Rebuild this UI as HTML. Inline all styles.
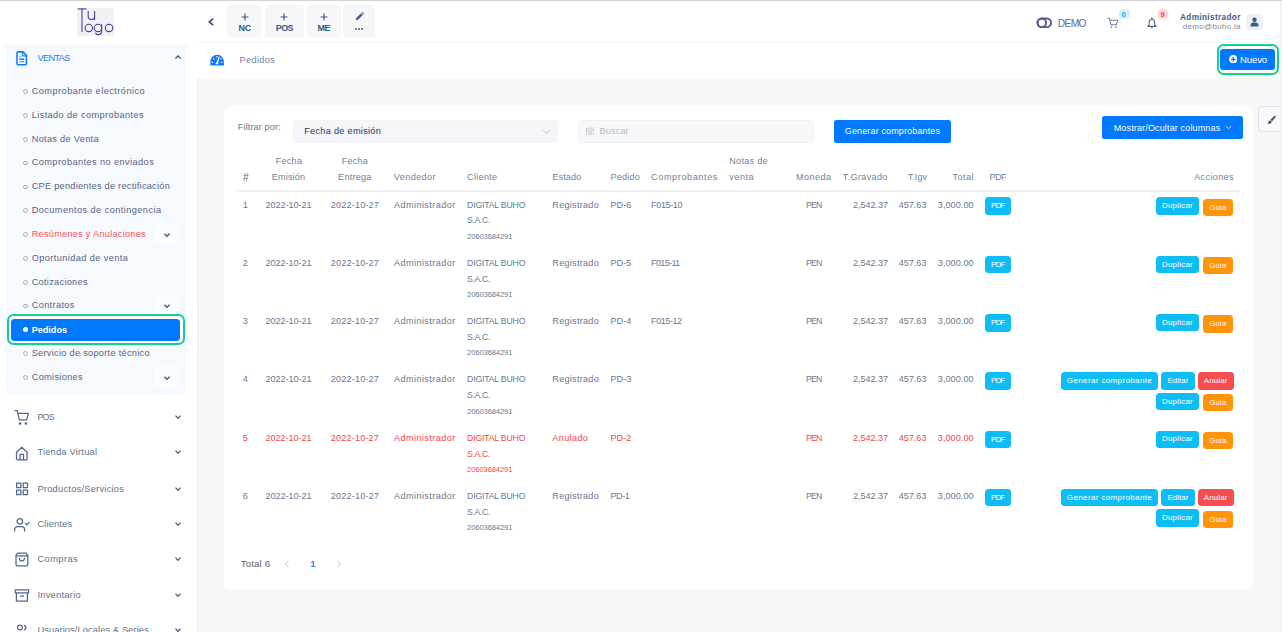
<!DOCTYPE html>
<html lang="es">
<head>
<meta charset="utf-8">
<title>Pedidos</title>
<style>
*{box-sizing:border-box;margin:0;padding:0}
html,body{width:1282px;height:632px;overflow:hidden}
body{font-family:"Liberation Sans",sans-serif;background:#f7f8fa;position:relative}
.t{position:absolute;white-space:nowrap;line-height:1;display:block}
.b{position:absolute;display:block}
</style>
</head>
<body>
<aside>
<div class="b" style="left:0.00px;top:0.00px;width:197.00px;height:632.00px;background:#fff;border-radius:0px;box-shadow:1px 0 2px rgba(30,40,60,.05);"></div>
<div class="b" style="left:77.10px;top:8.00px;width:36.80px;height:27.60px;background:#f1f1f3;border-radius:0px;"></div>
<svg class="b" style="left:77.00px;top:8.00px;" width="37" height="28" viewBox="77 8 37 28"><g fill="none" stroke="#493e9b" stroke-width="1.1" stroke-linecap="butt">
<path d="M77.7 8.9H86.3"/><path d="M82 8.5V31.9"/>
<path d="M88.2 11.1V16.3a3.2 3.2 0 0 0 6.4 0V11.1M94.6 16V20"/>
<circle cx="88.8" cy="27.95" r="3.7"/>
<circle cx="97.95" cy="27.95" r="3.7"/><path d="M101.65 24.2V31.4a3.3 3.2 0 0 1-6.3 1.3"/>
<circle cx="109.05" cy="27.95" r="3.7"/></g></svg>
<div class="b" style="left:4.60px;top:42.80px;width:182.10px;height:352.60px;background:#f6f9fe;border-radius:5px;"></div>
<svg class="b" style="left:16.00px;top:51.00px;" width="12" height="15" viewBox="0 0 12 15"><path d="M2.3 0.9H7l3.4 3.4V12.4a1.3 1.3 0 0 1-1.3 1.3H2.3A1.3 1.3 0 0 1 1 12.4V2.2A1.3 1.3 0 0 1 2.3 0.9Z" fill="#fff" stroke="#0b7dff" stroke-width="1.6" stroke-linejoin="round"/>
<path d="M6.5 1.2V4.9H10.2" fill="none" stroke="#0b7dff" stroke-width="1.2"/>
<path d="M3.2 5.8H4.9" stroke="#0b7dff" stroke-width="0.9"/><path d="M3.2 8.2H8.3" stroke="#0b7dff" stroke-width="1.5"/><path d="M3.2 10.8H8.3" stroke="#0b7dff" stroke-width="1"/></svg>
<span class="t" style="left:37.60px;top:54px;font-size:9.2px;color:#2b7af3;letter-spacing:-0.655px;">VENTAS</span>
<svg class="b" style="left:173.50px;top:54.00px;" width="8" height="6" viewBox="0 0 8 6"><path d="M1.4 4.6L4 2 6.6 4.6" fill="none" stroke="#4a5980" stroke-width="1.4"/></svg>
<div class="b" style="left:154.00px;top:223.38px;width:25.30px;height:21.80px;background:#fafcff;border-radius:3px;"></div>
<svg class="b" style="left:163.30px;top:231.68px;" width="8" height="6" viewBox="-4 -3 8 6"><path d="M-2.6 -1.3L0 1.3 2.6 -1.3" fill="none" stroke="#4a5980" stroke-width="1.5"/></svg>
<div class="b" style="left:154.00px;top:294.87px;width:25.30px;height:21.80px;background:#fafcff;border-radius:3px;"></div>
<svg class="b" style="left:163.30px;top:303.17px;" width="8" height="6" viewBox="-4 -3 8 6"><path d="M-2.6 -1.3L0 1.3 2.6 -1.3" fill="none" stroke="#4a5980" stroke-width="1.5"/></svg>
<div class="b" style="left:154.00px;top:366.36px;width:25.30px;height:21.80px;background:#fafcff;border-radius:3px;"></div>
<svg class="b" style="left:163.30px;top:374.66px;" width="8" height="6" viewBox="-4 -3 8 6"><path d="M-2.6 -1.3L0 1.3 2.6 -1.3" fill="none" stroke="#4a5980" stroke-width="1.5"/></svg>
<div class="b" style="left:23.10px;top:89.30px;width:4.60px;height:4.60px;background:transparent;border-radius:3px;border:1px solid #a9b0be;"></div>
<span class="t" style="left:31.70px;top:87px;font-size:9.2px;color:#56637e;letter-spacing:0.470px;">Comprobante electrónico</span>
<div class="b" style="left:23.10px;top:113.13px;width:4.60px;height:4.60px;background:transparent;border-radius:3px;border:1px solid #a9b0be;"></div>
<span class="t" style="left:31.70px;top:111px;font-size:9.2px;color:#56637e;letter-spacing:0.400px;">Listado de comprobantes</span>
<div class="b" style="left:23.10px;top:136.96px;width:4.60px;height:4.60px;background:transparent;border-radius:3px;border:1px solid #a9b0be;"></div>
<span class="t" style="left:31.70px;top:135px;font-size:9.2px;color:#56637e;letter-spacing:0.314px;">Notas de Venta</span>
<div class="b" style="left:23.10px;top:160.79px;width:4.60px;height:4.60px;background:transparent;border-radius:3px;border:1px solid #a9b0be;"></div>
<span class="t" style="left:31.70px;top:158px;font-size:9.2px;color:#56637e;letter-spacing:0.421px;">Comprobantes no enviados</span>
<div class="b" style="left:23.10px;top:184.62px;width:4.60px;height:4.60px;background:transparent;border-radius:3px;border:1px solid #a9b0be;"></div>
<span class="t" style="left:31.70px;top:182px;font-size:9.2px;color:#56637e;letter-spacing:0.261px;">CPE pendientes de rectificación</span>
<div class="b" style="left:23.10px;top:208.45px;width:4.60px;height:4.60px;background:transparent;border-radius:3px;border:1px solid #a9b0be;"></div>
<span class="t" style="left:31.70px;top:206px;font-size:9.2px;color:#56637e;letter-spacing:0.433px;">Documentos de contingencia</span>
<div class="b" style="left:23.10px;top:232.28px;width:4.60px;height:4.60px;background:transparent;border-radius:3px;border:1px solid #a9b0be;"></div>
<span class="t" style="left:31.70px;top:230px;font-size:9.2px;color:#f4545c;letter-spacing:0.260px;">Resúmenes y Anulaciones</span>
<div class="b" style="left:23.10px;top:256.11px;width:4.60px;height:4.60px;background:transparent;border-radius:3px;border:1px solid #a9b0be;"></div>
<span class="t" style="left:31.70px;top:254px;font-size:9.2px;color:#56637e;letter-spacing:0.411px;">Oportunidad de venta</span>
<div class="b" style="left:23.10px;top:279.94px;width:4.60px;height:4.60px;background:transparent;border-radius:3px;border:1px solid #a9b0be;"></div>
<span class="t" style="left:31.70px;top:278px;font-size:9.2px;color:#56637e;letter-spacing:0.294px;">Cotizaciones</span>
<div class="b" style="left:23.10px;top:303.77px;width:4.60px;height:4.60px;background:transparent;border-radius:3px;border:1px solid #a9b0be;"></div>
<span class="t" style="left:31.70px;top:301px;font-size:9.2px;color:#56637e;letter-spacing:0.357px;">Contratos</span>
<div class="b" style="left:7.00px;top:313.80px;width:178.00px;height:31.00px;background:#fff;border-radius:6.5px;border:2.3px solid #0ed28e;"></div>
<div class="b" style="left:10.80px;top:318.60px;width:169.50px;height:22.80px;background:#0079ff;border-radius:3.5px;"></div>
<div class="b" style="left:23.20px;top:327.40px;width:4.60px;height:4.60px;background:#fff;border-radius:3px;"></div>
<span class="t" style="left:31.70px;top:326px;font-size:9.1px;color:#fff;letter-spacing:-0.013px;font-weight:bold;">Pedidos</span>
<div class="b" style="left:23.10px;top:351.43px;width:4.60px;height:4.60px;background:transparent;border-radius:3px;border:1px solid #a9b0be;"></div>
<span class="t" style="left:31.70px;top:349px;font-size:9.2px;color:#56637e;letter-spacing:0.291px;">Servicio de soporte técnico</span>
<div class="b" style="left:23.10px;top:375.26px;width:4.60px;height:4.60px;background:transparent;border-radius:3px;border:1px solid #a9b0be;"></div>
<span class="t" style="left:31.70px;top:373px;font-size:9.2px;color:#56637e;letter-spacing:0.324px;">Comisiones</span>
<span class="t" style="left:37.40px;top:413px;font-size:8.8px;color:#62718c;letter-spacing:-0.695px;">POS</span>
<svg class="b" style="left:173.60px;top:414.40px;" width="8" height="6" viewBox="-4 -3 8 6"><path d="M-2.5 -1.35L0 1.35 2.5 -1.35" fill="none" stroke="#4a5980" stroke-width="1.35"/></svg>
<span class="t" style="left:37.40px;top:448px;font-size:9.3px;color:#62718c;letter-spacing:0.210px;">Tienda Virtual</span>
<svg class="b" style="left:173.60px;top:449.40px;" width="8" height="6" viewBox="-4 -3 8 6"><path d="M-2.5 -1.35L0 1.35 2.5 -1.35" fill="none" stroke="#4a5980" stroke-width="1.35"/></svg>
<span class="t" style="left:37.40px;top:485px;font-size:9.3px;color:#62718c;letter-spacing:0.243px;">Productos/Servicios</span>
<svg class="b" style="left:173.60px;top:485.50px;" width="8" height="6" viewBox="-4 -3 8 6"><path d="M-2.5 -1.35L0 1.35 2.5 -1.35" fill="none" stroke="#4a5980" stroke-width="1.35"/></svg>
<span class="t" style="left:37.40px;top:520px;font-size:9.3px;color:#62718c;letter-spacing:0.150px;">Clientes</span>
<svg class="b" style="left:173.60px;top:520.80px;" width="8" height="6" viewBox="-4 -3 8 6"><path d="M-2.5 -1.35L0 1.35 2.5 -1.35" fill="none" stroke="#4a5980" stroke-width="1.35"/></svg>
<span class="t" style="left:37.40px;top:555px;font-size:9.3px;color:#62718c;letter-spacing:0.425px;">Compras</span>
<svg class="b" style="left:173.60px;top:556.40px;" width="8" height="6" viewBox="-4 -3 8 6"><path d="M-2.5 -1.35L0 1.35 2.5 -1.35" fill="none" stroke="#4a5980" stroke-width="1.35"/></svg>
<span class="t" style="left:37.40px;top:591px;font-size:9.3px;color:#62718c;letter-spacing:0.276px;">Inventario</span>
<svg class="b" style="left:173.60px;top:591.70px;" width="8" height="6" viewBox="-4 -3 8 6"><path d="M-2.5 -1.35L0 1.35 2.5 -1.35" fill="none" stroke="#4a5980" stroke-width="1.35"/></svg>
<span class="t" style="left:37.40px;top:626px;font-size:9.3px;color:#62718c;letter-spacing:0.098px;">Usuarios/Locales & Series</span>
<svg class="b" style="left:173.60px;top:627.30px;" width="8" height="6" viewBox="-4 -3 8 6"><path d="M-2.5 -1.35L0 1.35 2.5 -1.35" fill="none" stroke="#4a5980" stroke-width="1.35"/></svg>
<svg class="b" style="left:14.00px;top:409.00px;" width="16" height="17" viewBox="0 0 16 17"><g fill="none" stroke="#55658d" stroke-width="1.25" stroke-linecap="round" stroke-linejoin="round"><path d="M1 1.6H3.2L5.3 10.8H12.6L14.4 4.4H4"/></g><circle cx="6.1" cy="14.4" r="1.25" fill="#55658d"/><circle cx="11.9" cy="14.4" r="1.25" fill="#55658d"/></svg>
<svg class="b" style="left:14.00px;top:445.00px;" width="16" height="17" viewBox="0 0 16 17"><g fill="none" stroke="#55658d" stroke-width="1.25" stroke-linecap="round" stroke-linejoin="round"><path d="M2.5 7.2L7.8 2.3L13.1 7.2V13.6a1.2 1.2 0 0 1-1.2 1.2H3.7A1.2 1.2 0 0 1 2.5 13.6Z"/><path d="M6.1 14.6V9.4H9.5V14.6"/></g></svg>
<svg class="b" style="left:14.00px;top:481.00px;" width="16" height="16" viewBox="0 0 16 16"><g fill="none" stroke="#55658d" stroke-width="1.25" stroke-linecap="round" stroke-linejoin="round" stroke-linejoin="miter"><rect x="2.6" y="2.1" width="4.3" height="4.5"/><rect x="9.2" y="2.1" width="4.3" height="4.5"/><rect x="2.6" y="9" width="4.3" height="4.5"/><rect x="9.2" y="9" width="4.3" height="4.5"/></g></svg>
<svg class="b" style="left:13.00px;top:517.00px;" width="18" height="16" viewBox="0 0 18 16"><g fill="none" stroke="#55658d" stroke-width="1.25" stroke-linecap="round" stroke-linejoin="round"><circle cx="6.8" cy="4.4" r="2.7"/><path d="M1.6 14V12.6a3 3 0 0 1 3-3H8.6a3 3 0 0 1 3 3V14"/><path d="M12.4 6.4L13.8 7.8 16 5.4"/></g></svg>
<svg class="b" style="left:14.00px;top:551.00px;" width="16" height="17" viewBox="0 0 16 17"><g fill="none" stroke="#55658d" stroke-width="1.25" stroke-linecap="round" stroke-linejoin="round"><path d="M3.4 2.2H12.4L13.8 4.6V13.6a1.3 1.3 0 0 1-1.3 1.3H3.3A1.3 1.3 0 0 1 2 13.6V4.6Z"/><path d="M2.2 4.8H13.6"/><path d="M5.4 7.4a2.5 2.5 0 0 0 5 0"/></g></svg>
<svg class="b" style="left:14.00px;top:588.00px;" width="16" height="15" viewBox="0 0 16 15"><g fill="none" stroke="#55658d" stroke-width="1.25" stroke-linecap="round" stroke-linejoin="round"><path d="M1.2 1.8H14.6V4.8H1.2Z"/><path d="M2.4 5V13.2H13.4V5"/><path d="M6.4 8H9.4"/></g></svg>
<svg class="b" style="left:16.00px;top:623.00px;" width="14" height="10" viewBox="0 0 14 10"><g fill="none" stroke="#55658d" stroke-width="1.25" stroke-linecap="round" stroke-linejoin="round" stroke-width="1.5"><circle cx="3.9" cy="4.6" r="2.4"/><path d="M8.4 2.3a2.5 2.5 0 0 1 0 4.6"/></g></svg>
</aside>
<header>
<div class="b" style="left:197.00px;top:0.00px;width:1083.00px;height:42.00px;background:#fff;border-radius:0px;"></div>
<div class="b" style="left:197.00px;top:42.00px;width:1083.00px;height:1.00px;background:#f3f4f7;border-radius:0px;"></div>
<div class="b" style="left:197.00px;top:43.00px;width:1083.00px;height:34.70px;background:#fff;border-radius:0px;"></div>
<svg class="b" style="left:206.00px;top:16.00px;" width="10" height="12" viewBox="0 0 10 12"><path d="M7.2 2.7L3.3 5.9 7.2 9.1" fill="none" stroke="#3f4e72" stroke-width="1.7"/></svg>
<div class="b" style="left:227.40px;top:4.00px;width:34.60px;height:33.90px;background:#f6f7f9;border-radius:4.5px;"></div>
<svg class="b" style="left:240.70px;top:12.70px;" width="8" height="8" viewBox="0 0 8 8"><path d="M4 0.6V7.4M0.6 4H7.4" stroke="#42597f" stroke-width="1.15"/></svg>
<span class="t" style="left:238.45px;top:24px;font-size:9px;color:#42557f;letter-spacing:-0.250px;font-weight:bold;">NC</span>
<div class="b" style="left:264.80px;top:4.00px;width:39.20px;height:33.90px;background:#f6f7f9;border-radius:4.5px;"></div>
<svg class="b" style="left:280.40px;top:12.70px;" width="8" height="8" viewBox="0 0 8 8"><path d="M4 0.6V7.4M0.6 4H7.4" stroke="#42597f" stroke-width="1.15"/></svg>
<span class="t" style="left:275.85px;top:24px;font-size:9px;color:#42557f;letter-spacing:-0.636px;font-weight:bold;">POS</span>
<div class="b" style="left:306.80px;top:4.00px;width:33.90px;height:33.90px;background:#f6f7f9;border-radius:4.5px;"></div>
<svg class="b" style="left:319.75px;top:12.70px;" width="8" height="8" viewBox="0 0 8 8"><path d="M4 0.6V7.4M0.6 4H7.4" stroke="#42597f" stroke-width="1.15"/></svg>
<span class="t" style="left:317.55px;top:24px;font-size:9px;color:#42557f;letter-spacing:-0.550px;font-weight:bold;">ME</span>
<div class="b" style="left:343.20px;top:4.00px;width:31.40px;height:33.90px;background:#f6f7f9;border-radius:4.5px;"></div>
<svg class="b" style="left:354.60px;top:11.80px;" width="9" height="9" viewBox="0 0 10 10"><path d="M0.8 9.2L1.4 6.6 6.4 1.6 8.4 3.6 3.4 8.6Z M7 1L7.6 0.5a0.8 0.8 0 0 1 1.1 0L9.5 1.3a0.8 0.8 0 0 1 0 1.1L9 3Z" fill="#3f5a8c"/></svg>
<div class="b" style="left:355.40px;top:27.90px;width:2.00px;height:2.20px;background:#44537a;border-radius:1px;"></div>
<div class="b" style="left:358.20px;top:27.90px;width:2.00px;height:2.20px;background:#44537a;border-radius:1px;"></div>
<div class="b" style="left:361.00px;top:27.90px;width:2.00px;height:2.20px;background:#44537a;border-radius:1px;"></div>
<svg class="b" style="left:209.80px;top:53.90px;" width="14.3" height="12" viewBox="0 0 15 12.4"><path d="M0.4 12V8a7.1 7.4 0 0 1 14.2 0V12Z" fill="#0a78ff"/>
<path d="M7.6 9.6L9.4 3.2" stroke="#fff" stroke-width="1.4" stroke-linecap="round"/><circle cx="7.4" cy="9.6" r="1.3" fill="#fff"/>
<circle cx="2.6" cy="8.6" r="0.8" fill="#fff"/><circle cx="4" cy="4.8" r="0.8" fill="#fff"/><circle cx="7.2" cy="2.8" r="0.8" fill="#fff"/><circle cx="11.4" cy="5" r="0.8" fill="#fff"/><circle cx="12.6" cy="8.6" r="0.8" fill="#fff"/></svg>
<span class="t" style="left:239.60px;top:56px;font-size:9.2px;color:#74819a;letter-spacing:0.336px;">Pedidos</span>
<svg class="b" style="left:1036.00px;top:17.00px;" width="17" height="12" viewBox="0 0 17 12"><rect x="1.5" y="1.5" width="13.6" height="8.6" rx="4.3" fill="none" stroke="#50608a" stroke-width="1.9"/><circle cx="5.8" cy="5.8" r="4.3" fill="none" stroke="#50608a" stroke-width="1.9"/></svg>
<span class="t" style="left:1057.70px;top:19px;font-size:10.3px;color:#5d6b8a;letter-spacing:-0.650px;">DEMO</span>
<svg class="b" style="left:1106.50px;top:17.20px;" width="12" height="12" viewBox="0 0 12 12"><g fill="none" stroke="#717e99" stroke-width="1.05" stroke-linecap="round" stroke-linejoin="round"><path d="M0.8 1.2H2.4L4 7.8H9.4L10.8 3.2H3"/></g><circle cx="4.6" cy="10.1" r="0.85" fill="#717e99"/><circle cx="9" cy="10.1" r="0.85" fill="#717e99"/></svg>
<div class="b" style="left:1119.00px;top:9.40px;width:10.50px;height:9.80px;background:#d6f0fc;border-radius:3px;"></div>
<span class="t" style="left:1121.56px;top:11px;font-size:7.5px;color:#19aeea;font-weight:bold;">0</span>
<svg class="b" style="left:1146.00px;top:17.40px;" width="12" height="12" viewBox="0 0 12 12"><g fill="none" stroke="#5d6b8a" stroke-width="1.15" stroke-linecap="round" stroke-linejoin="round"><path d="M3.2 8.3V5.1a2.7 2.9 0 0 1 5.4 0V8.3L10.2 9.3H1.6Z"/><path d="M5.9 9.6V11"/><path d="M5.9 0.5V1.8"/></g></svg>
<div class="b" style="left:1158.00px;top:9.40px;width:10.30px;height:9.80px;background:#ffd8db;border-radius:3px;"></div>
<span class="t" style="left:1160.46px;top:11px;font-size:7.5px;color:#f0444c;font-weight:bold;">9</span>
<span class="t" style="left:1180.10px;top:14px;font-size:8.2px;color:#42588a;letter-spacing:0.359px;font-weight:bold;">Administrador</span>
<span class="t" style="left:1182.80px;top:23px;font-size:8px;color:#7d889d;letter-spacing:0.302px;">demo@buho.la</span>
<div class="b" style="left:1246.00px;top:13.80px;width:17.00px;height:16.20px;background:#eef0f4;border-radius:3.5px;"></div>
<svg class="b" style="left:1250.00px;top:17.00px;" width="9" height="10" viewBox="0 0 9 10"><circle cx="4.5" cy="2.8" r="2.2" fill="#3f5a8a"/><path d="M0.6 9.4V8a2.6 2.6 0 0 1 2.6-2.6H5.8A2.6 2.6 0 0 1 8.4 8V9.4Z" fill="#3f5a8a"/></svg>
<div class="b" style="left:1217.00px;top:44.00px;width:62.00px;height:31.00px;background:#fff;border-radius:6.5px;border:2.4px solid #0ed28e;"></div>
<div class="b" style="left:1220.40px;top:48.50px;width:54.20px;height:21.70px;background:#0079ff;border-radius:3px;"></div>
<svg class="b" style="left:1228.70px;top:54.90px;" width="8.6" height="8.6" viewBox="0 0 8.4 8.4"><circle cx="4.2" cy="4.2" r="4.1" fill="#fff"/><path d="M4.2 2V6.4M2 4.2H6.4" stroke="#0079ff" stroke-width="1.3"/></svg>
<span class="t" style="left:1240.00px;top:55px;font-size:9.6px;color:#fff;letter-spacing:-0.150px;">Nuevo</span>
<div class="b" style="left:1258.00px;top:106.20px;width:24.00px;height:26.20px;background:#f8f9fa;border-radius:0px;border:1px solid #e0e2e7;border-right:none;border-radius:4px 0 0 4px;"></div>
<svg class="b" style="left:1266.80px;top:115.00px;" width="9" height="9.6" viewBox="0 0 12 12"><path d="M10.6 0.2L11.9 1.5 6.8 8 4.6 6Z" fill="#43474f"/><path d="M4.2 6.6L6.2 8.6C6 10.8 3.4 11.8 0.4 11.2 2.4 10.2 2.2 7 4.2 6.6Z" fill="#43474f"/></svg>
<div class="b" style="left:1280.00px;top:0.00px;width:2.00px;height:632.00px;background:#f1f2f4;border-radius:0px;"></div>
</header>
<main>
<div class="b" style="left:223.60px;top:105.70px;width:1029.60px;height:483.10px;background:#fff;border-radius:8px;"></div>
<span class="t" style="left:237.80px;top:123px;font-size:9.1px;color:#69778f;letter-spacing:0.129px;">Filtrar por:</span>
<div class="b" style="left:293.00px;top:120.00px;width:264.60px;height:22.60px;background:#f5f6f9;border-radius:4px;border:1px solid #f1f2f5;"></div>
<span class="t" style="left:304.20px;top:127px;font-size:9.2px;color:#2c3957;letter-spacing:0.274px;">Fecha de emisión</span>
<svg class="b" style="left:541.50px;top:128.80px;" width="9" height="6" viewBox="0 0 9 6"><path d="M0.8 1L4.5 4.6 8.2 1" fill="none" stroke="#b3bac6" stroke-width="0.9"/></svg>
<div class="b" style="left:578.30px;top:120.00px;width:235.30px;height:22.60px;background:#f7f8fa;border-radius:4px;border:1px solid #eef0f3;"></div>
<svg class="b" style="left:586.00px;top:126.80px;" width="8.4" height="8.4" viewBox="0 0 8.4 8.4"><g fill="none" stroke="#b9bfca" stroke-width="0.8"><rect x="0.5" y="1.1" width="7.4" height="6.8" rx="0.6"/><path d="M0.5 3.1H7.9M2.2 4.8H6.2M2.2 6.2H6.2"/></g></svg>
<span class="t" style="left:599.60px;top:127px;font-size:9.1px;color:#b4b9c3;letter-spacing:0.147px;">Buscar</span>
<div class="b" style="left:834.00px;top:120.00px;width:116.90px;height:22.50px;background:#0079ff;border-radius:2.5px;"></div>
<span class="t" style="left:844.80px;top:127px;font-size:9px;color:#fff;letter-spacing:0.138px;">Generar comprobantes</span>
<div class="b" style="left:1102.30px;top:116.00px;width:140.70px;height:23.10px;background:#0079ff;border-radius:2.5px;"></div>
<span class="t" style="left:1113.70px;top:124px;font-size:9px;color:#fff;letter-spacing:0.149px;">Mostrar/Ocultar columnas</span>
<svg class="b" style="left:1224.80px;top:125.00px;" width="7" height="5" viewBox="0 0 7 5"><path d="M0.7 1L3.5 3.8 6.3 1" fill="none" stroke="#fff" stroke-width="0.8"/></svg>
<span class="t" style="left:243.10px;top:173px;font-size:10.3px;color:#5a6880;">#</span>
<span class="t" style="left:275.80px;top:157px;font-size:9.1px;color:#717f97;letter-spacing:0.222px;">Fecha</span>
<span class="t" style="left:271.75px;top:173px;font-size:9.1px;color:#717f97;letter-spacing:0.162px;">Emisión</span>
<span class="t" style="left:341.70px;top:157px;font-size:9.1px;color:#717f97;letter-spacing:0.222px;">Fecha</span>
<span class="t" style="left:338.10px;top:173px;font-size:9.1px;color:#717f97;letter-spacing:0.247px;">Entrega</span>
<span class="t" style="left:393.80px;top:173px;font-size:9.1px;color:#717f97;letter-spacing:0.405px;">Vendedor</span>
<span class="t" style="left:467.10px;top:173px;font-size:9.1px;color:#717f97;letter-spacing:0.296px;">Cliente</span>
<span class="t" style="left:552.30px;top:173px;font-size:9.1px;color:#717f97;letter-spacing:0.112px;">Estado</span>
<span class="t" style="left:610.50px;top:173px;font-size:9.1px;color:#717f97;letter-spacing:0.211px;">Pedido</span>
<span class="t" style="left:651.10px;top:173px;font-size:9.1px;color:#717f97;letter-spacing:0.601px;">Comprobantes</span>
<span class="t" style="left:729.20px;top:157px;font-size:9.1px;color:#717f97;letter-spacing:0.285px;">Notas de</span>
<span class="t" style="left:729.20px;top:173px;font-size:9.1px;color:#717f97;letter-spacing:0.548px;">venta</span>
<span class="t" style="left:796.10px;top:173px;font-size:9.1px;color:#717f97;letter-spacing:0.436px;">Moneda</span>
<span class="t" style="left:842.80px;top:173px;font-size:9.1px;color:#717f97;letter-spacing:0.325px;">T.Gravado</span>
<span class="t" style="left:907.70px;top:173px;font-size:9.1px;color:#717f97;letter-spacing:0.057px;">T.Igv</span>
<span class="t" style="left:952.60px;top:173px;font-size:9.1px;color:#717f97;letter-spacing:0.456px;">Total</span>
<span class="t" style="left:989.60px;top:173px;font-size:9.1px;color:#717f97;letter-spacing:-0.667px;">PDF</span>
<span class="t" style="left:1194.20px;top:173px;font-size:9.1px;color:#717f97;letter-spacing:0.347px;">Acciones</span>
<div class="b" style="left:237.20px;top:190.30px;width:1002.50px;height:1.60px;background:#f0f2f5;border-radius:0px;"></div>
<span class="t" style="left:242.80px;top:201px;font-size:9.1px;color:#69778f;">1</span>
<span class="t" style="left:265.50px;top:201px;font-size:9.1px;color:#69778f;letter-spacing:-0.054px;">2022-10-21</span>
<span class="t" style="left:330.80px;top:201px;font-size:9.1px;color:#69778f;letter-spacing:0.176px;">2022-10-27</span>
<span class="t" style="left:393.90px;top:201px;font-size:9.1px;color:#69778f;letter-spacing:0.444px;">Administrador</span>
<span class="t" style="left:467.10px;top:201px;font-size:8.7px;color:#69778f;letter-spacing:-0.185px;">DIGITAL BUHO</span>
<span class="t" style="left:467.10px;top:216px;font-size:8.7px;color:#69778f;letter-spacing:-0.373px;">S.A.C.</span>
<span class="t" style="left:467.10px;top:233px;font-size:7.6px;color:#69778f;letter-spacing:-0.117px;">20603684291</span>
<span class="t" style="left:552.30px;top:201px;font-size:9.1px;color:#69778f;letter-spacing:0.270px;">Registrado</span>
<span class="t" style="left:610.50px;top:201px;font-size:9.1px;color:#69778f;letter-spacing:0.042px;">PD-6</span>
<span class="t" style="left:651.10px;top:201px;font-size:9.1px;color:#69778f;letter-spacing:-0.413px;">F015-10</span>
<span class="t" style="left:806.00px;top:201px;font-size:8.7px;color:#69778f;letter-spacing:-0.763px;">PEN</span>
<span class="t" style="left:853.00px;top:201px;font-size:9.1px;color:#69778f;letter-spacing:-0.065px;">2,542.37</span>
<span class="t" style="left:898.70px;top:201px;font-size:9.1px;color:#69778f;letter-spacing:-0.005px;">457.63</span>
<span class="t" style="left:937.80px;top:201px;font-size:9.1px;color:#69778f;letter-spacing:0.060px;">3,000.00</span>
<div class="b" style="left:984.70px;top:197.30px;width:26.10px;height:17.70px;background:#0fbdf6;border-radius:3.5px;"></div>
<span class="t" style="left:991.10px;top:202px;font-size:7.9px;color:#fff;letter-spacing:-0.867px;">PDF</span>
<div class="b" style="left:1155.70px;top:197.30px;width:43.70px;height:17.50px;background:#0fbdf6;border-radius:3.5px;"></div>
<span class="t" style="left:1161.95px;top:202px;font-size:7.9px;color:#fff;letter-spacing:0.266px;">Duplicar</span>
<div class="b" style="left:1203.00px;top:198.70px;width:29.90px;height:17.40px;background:#ff9409;border-radius:3.5px;"></div>
<span class="t" style="left:1209.20px;top:204px;font-size:7.9px;color:#fff;letter-spacing:0.069px;">Guía</span>
<span class="t" style="left:242.80px;top:259px;font-size:9.1px;color:#69778f;">2</span>
<span class="t" style="left:265.50px;top:259px;font-size:9.1px;color:#69778f;letter-spacing:-0.054px;">2022-10-21</span>
<span class="t" style="left:330.80px;top:259px;font-size:9.1px;color:#69778f;letter-spacing:0.176px;">2022-10-27</span>
<span class="t" style="left:393.90px;top:259px;font-size:9.1px;color:#69778f;letter-spacing:0.444px;">Administrador</span>
<span class="t" style="left:467.10px;top:259px;font-size:8.7px;color:#69778f;letter-spacing:-0.185px;">DIGITAL BUHO</span>
<span class="t" style="left:467.10px;top:275px;font-size:8.7px;color:#69778f;letter-spacing:-0.373px;">S.A.C.</span>
<span class="t" style="left:467.10px;top:291px;font-size:7.6px;color:#69778f;letter-spacing:-0.117px;">20603684291</span>
<span class="t" style="left:552.30px;top:259px;font-size:9.1px;color:#69778f;letter-spacing:0.270px;">Registrado</span>
<span class="t" style="left:610.50px;top:259px;font-size:9.1px;color:#69778f;letter-spacing:0.042px;">PD-5</span>
<span class="t" style="left:651.10px;top:259px;font-size:9.1px;color:#69778f;letter-spacing:-0.688px;">F015-11</span>
<span class="t" style="left:806.00px;top:259px;font-size:8.7px;color:#69778f;letter-spacing:-0.763px;">PEN</span>
<span class="t" style="left:853.00px;top:259px;font-size:9.1px;color:#69778f;letter-spacing:-0.065px;">2,542.37</span>
<span class="t" style="left:898.70px;top:259px;font-size:9.1px;color:#69778f;letter-spacing:-0.005px;">457.63</span>
<span class="t" style="left:937.80px;top:259px;font-size:9.1px;color:#69778f;letter-spacing:0.060px;">3,000.00</span>
<div class="b" style="left:984.70px;top:255.60px;width:26.10px;height:17.70px;background:#0fbdf6;border-radius:3.5px;"></div>
<span class="t" style="left:991.10px;top:261px;font-size:7.9px;color:#fff;letter-spacing:-0.867px;">PDF</span>
<div class="b" style="left:1155.70px;top:255.60px;width:43.70px;height:17.50px;background:#0fbdf6;border-radius:3.5px;"></div>
<span class="t" style="left:1161.95px;top:261px;font-size:7.9px;color:#fff;letter-spacing:0.266px;">Duplicar</span>
<div class="b" style="left:1203.00px;top:257.00px;width:29.90px;height:17.40px;background:#ff9409;border-radius:3.5px;"></div>
<span class="t" style="left:1209.20px;top:262px;font-size:7.9px;color:#fff;letter-spacing:0.069px;">Guía</span>
<span class="t" style="left:242.80px;top:317px;font-size:9.1px;color:#69778f;">3</span>
<span class="t" style="left:265.50px;top:317px;font-size:9.1px;color:#69778f;letter-spacing:-0.054px;">2022-10-21</span>
<span class="t" style="left:330.80px;top:317px;font-size:9.1px;color:#69778f;letter-spacing:0.176px;">2022-10-27</span>
<span class="t" style="left:393.90px;top:317px;font-size:9.1px;color:#69778f;letter-spacing:0.444px;">Administrador</span>
<span class="t" style="left:467.10px;top:317px;font-size:8.7px;color:#69778f;letter-spacing:-0.185px;">DIGITAL BUHO</span>
<span class="t" style="left:467.10px;top:333px;font-size:8.7px;color:#69778f;letter-spacing:-0.373px;">S.A.C.</span>
<span class="t" style="left:467.10px;top:349px;font-size:7.6px;color:#69778f;letter-spacing:-0.117px;">20603684291</span>
<span class="t" style="left:552.30px;top:317px;font-size:9.1px;color:#69778f;letter-spacing:0.270px;">Registrado</span>
<span class="t" style="left:610.50px;top:317px;font-size:9.1px;color:#69778f;letter-spacing:0.042px;">PD-4</span>
<span class="t" style="left:651.10px;top:317px;font-size:9.1px;color:#69778f;letter-spacing:-0.470px;">F015-12</span>
<span class="t" style="left:806.00px;top:317px;font-size:8.7px;color:#69778f;letter-spacing:-0.763px;">PEN</span>
<span class="t" style="left:853.00px;top:317px;font-size:9.1px;color:#69778f;letter-spacing:-0.065px;">2,542.37</span>
<span class="t" style="left:898.70px;top:317px;font-size:9.1px;color:#69778f;letter-spacing:-0.005px;">457.63</span>
<span class="t" style="left:937.80px;top:317px;font-size:9.1px;color:#69778f;letter-spacing:0.060px;">3,000.00</span>
<div class="b" style="left:984.70px;top:313.90px;width:26.10px;height:17.70px;background:#0fbdf6;border-radius:3.5px;"></div>
<span class="t" style="left:991.10px;top:319px;font-size:7.9px;color:#fff;letter-spacing:-0.867px;">PDF</span>
<div class="b" style="left:1155.70px;top:313.90px;width:43.70px;height:17.50px;background:#0fbdf6;border-radius:3.5px;"></div>
<span class="t" style="left:1161.95px;top:319px;font-size:7.9px;color:#fff;letter-spacing:0.266px;">Duplicar</span>
<div class="b" style="left:1203.00px;top:315.30px;width:29.90px;height:17.40px;background:#ff9409;border-radius:3.5px;"></div>
<span class="t" style="left:1209.20px;top:320px;font-size:7.9px;color:#fff;letter-spacing:0.069px;">Guía</span>
<span class="t" style="left:242.80px;top:375px;font-size:9.1px;color:#69778f;">4</span>
<span class="t" style="left:265.50px;top:375px;font-size:9.1px;color:#69778f;letter-spacing:-0.054px;">2022-10-21</span>
<span class="t" style="left:330.80px;top:375px;font-size:9.1px;color:#69778f;letter-spacing:0.176px;">2022-10-27</span>
<span class="t" style="left:393.90px;top:375px;font-size:9.1px;color:#69778f;letter-spacing:0.444px;">Administrador</span>
<span class="t" style="left:467.10px;top:375px;font-size:8.7px;color:#69778f;letter-spacing:-0.185px;">DIGITAL BUHO</span>
<span class="t" style="left:467.10px;top:391px;font-size:8.7px;color:#69778f;letter-spacing:-0.373px;">S.A.C.</span>
<span class="t" style="left:467.10px;top:408px;font-size:7.6px;color:#69778f;letter-spacing:-0.117px;">20603684291</span>
<span class="t" style="left:552.30px;top:375px;font-size:9.1px;color:#69778f;letter-spacing:0.270px;">Registrado</span>
<span class="t" style="left:610.50px;top:375px;font-size:9.1px;color:#69778f;letter-spacing:0.042px;">PD-3</span>
<span class="t" style="left:806.00px;top:375px;font-size:8.7px;color:#69778f;letter-spacing:-0.763px;">PEN</span>
<span class="t" style="left:853.00px;top:375px;font-size:9.1px;color:#69778f;letter-spacing:-0.065px;">2,542.37</span>
<span class="t" style="left:898.70px;top:375px;font-size:9.1px;color:#69778f;letter-spacing:-0.005px;">457.63</span>
<span class="t" style="left:937.80px;top:375px;font-size:9.1px;color:#69778f;letter-spacing:0.060px;">3,000.00</span>
<div class="b" style="left:984.70px;top:372.20px;width:26.10px;height:17.70px;background:#0fbdf6;border-radius:3.5px;"></div>
<span class="t" style="left:991.10px;top:377px;font-size:7.9px;color:#fff;letter-spacing:-0.867px;">PDF</span>
<div class="b" style="left:1060.90px;top:372.20px;width:97.20px;height:17.50px;background:#0fbdf6;border-radius:3.5px;"></div>
<span class="t" style="left:1066.85px;top:377px;font-size:8px;color:#fff;letter-spacing:0.371px;">Generar comprobante</span>
<div class="b" style="left:1161.00px;top:372.20px;width:33.80px;height:17.50px;background:#0fbdf6;border-radius:3.5px;"></div>
<span class="t" style="left:1167.45px;top:377px;font-size:7.9px;color:#fff;letter-spacing:0.044px;">Editar</span>
<div class="b" style="left:1197.50px;top:372.20px;width:36.40px;height:17.50px;background:#f64d50;border-radius:3.5px;"></div>
<span class="t" style="left:1203.70px;top:377px;font-size:7.9px;color:#fff;letter-spacing:0.194px;">Anular</span>
<div class="b" style="left:1155.70px;top:392.70px;width:43.70px;height:17.50px;background:#0fbdf6;border-radius:3.5px;"></div>
<span class="t" style="left:1161.95px;top:398px;font-size:7.9px;color:#fff;letter-spacing:0.266px;">Duplicar</span>
<div class="b" style="left:1203.00px;top:394.10px;width:29.90px;height:17.40px;background:#ff9409;border-radius:3.5px;"></div>
<span class="t" style="left:1209.20px;top:399px;font-size:7.9px;color:#fff;letter-spacing:0.069px;">Guía</span>
<span class="t" style="left:242.80px;top:434px;font-size:9.1px;color:#f3444c;">5</span>
<span class="t" style="left:265.50px;top:434px;font-size:9.1px;color:#f3444c;letter-spacing:-0.054px;">2022-10-21</span>
<span class="t" style="left:330.80px;top:434px;font-size:9.1px;color:#f3444c;letter-spacing:0.176px;">2022-10-27</span>
<span class="t" style="left:393.90px;top:434px;font-size:9.1px;color:#f3444c;letter-spacing:0.444px;">Administrador</span>
<span class="t" style="left:467.10px;top:434px;font-size:8.7px;color:#f3444c;letter-spacing:-0.185px;">DIGITAL BUHO</span>
<span class="t" style="left:467.10px;top:450px;font-size:8.7px;color:#f3444c;letter-spacing:-0.373px;">S.A.C.</span>
<span class="t" style="left:467.10px;top:466px;font-size:7.6px;color:#f3444c;letter-spacing:-0.117px;">20603684291</span>
<span class="t" style="left:552.30px;top:434px;font-size:9.1px;color:#f3444c;letter-spacing:0.372px;">Anulado</span>
<span class="t" style="left:610.50px;top:434px;font-size:9.1px;color:#f3444c;letter-spacing:0.042px;">PD-2</span>
<span class="t" style="left:806.00px;top:434px;font-size:8.7px;color:#f3444c;letter-spacing:-0.763px;">PEN</span>
<span class="t" style="left:853.00px;top:434px;font-size:9.1px;color:#f3444c;letter-spacing:-0.065px;">2,542.37</span>
<span class="t" style="left:898.70px;top:434px;font-size:9.1px;color:#f3444c;letter-spacing:-0.005px;">457.63</span>
<span class="t" style="left:937.80px;top:434px;font-size:9.1px;color:#f3444c;letter-spacing:0.060px;">3,000.00</span>
<div class="b" style="left:984.70px;top:430.50px;width:26.10px;height:17.70px;background:#0fbdf6;border-radius:3.5px;"></div>
<span class="t" style="left:991.10px;top:436px;font-size:7.9px;color:#fff;letter-spacing:-0.867px;">PDF</span>
<div class="b" style="left:1155.70px;top:430.50px;width:43.70px;height:17.50px;background:#0fbdf6;border-radius:3.5px;"></div>
<span class="t" style="left:1161.95px;top:435px;font-size:7.9px;color:#fff;letter-spacing:0.266px;">Duplicar</span>
<div class="b" style="left:1203.00px;top:431.90px;width:29.90px;height:17.40px;background:#ff9409;border-radius:3.5px;"></div>
<span class="t" style="left:1209.20px;top:437px;font-size:7.9px;color:#fff;letter-spacing:0.069px;">Guía</span>
<span class="t" style="left:242.80px;top:492px;font-size:9.1px;color:#69778f;">6</span>
<span class="t" style="left:265.50px;top:492px;font-size:9.1px;color:#69778f;letter-spacing:-0.054px;">2022-10-21</span>
<span class="t" style="left:330.80px;top:492px;font-size:9.1px;color:#69778f;letter-spacing:0.176px;">2022-10-27</span>
<span class="t" style="left:393.90px;top:492px;font-size:9.1px;color:#69778f;letter-spacing:0.444px;">Administrador</span>
<span class="t" style="left:467.10px;top:492px;font-size:8.7px;color:#69778f;letter-spacing:-0.185px;">DIGITAL BUHO</span>
<span class="t" style="left:467.10px;top:508px;font-size:8.7px;color:#69778f;letter-spacing:-0.373px;">S.A.C.</span>
<span class="t" style="left:467.10px;top:524px;font-size:7.6px;color:#69778f;letter-spacing:-0.117px;">20603684291</span>
<span class="t" style="left:552.30px;top:492px;font-size:9.1px;color:#69778f;letter-spacing:0.270px;">Registrado</span>
<span class="t" style="left:610.50px;top:492px;font-size:9.1px;color:#69778f;letter-spacing:-0.483px;">PD-1</span>
<span class="t" style="left:806.00px;top:492px;font-size:8.7px;color:#69778f;letter-spacing:-0.763px;">PEN</span>
<span class="t" style="left:853.00px;top:492px;font-size:9.1px;color:#69778f;letter-spacing:-0.065px;">2,542.37</span>
<span class="t" style="left:898.70px;top:492px;font-size:9.1px;color:#69778f;letter-spacing:-0.005px;">457.63</span>
<span class="t" style="left:937.80px;top:492px;font-size:9.1px;color:#69778f;letter-spacing:0.060px;">3,000.00</span>
<div class="b" style="left:984.70px;top:488.80px;width:26.10px;height:17.70px;background:#0fbdf6;border-radius:3.5px;"></div>
<span class="t" style="left:991.10px;top:494px;font-size:7.9px;color:#fff;letter-spacing:-0.867px;">PDF</span>
<div class="b" style="left:1060.90px;top:488.80px;width:97.20px;height:17.50px;background:#0fbdf6;border-radius:3.5px;"></div>
<span class="t" style="left:1066.85px;top:494px;font-size:8px;color:#fff;letter-spacing:0.371px;">Generar comprobante</span>
<div class="b" style="left:1161.00px;top:488.80px;width:33.80px;height:17.50px;background:#0fbdf6;border-radius:3.5px;"></div>
<span class="t" style="left:1167.45px;top:494px;font-size:7.9px;color:#fff;letter-spacing:0.044px;">Editar</span>
<div class="b" style="left:1197.50px;top:488.80px;width:36.40px;height:17.50px;background:#f64d50;border-radius:3.5px;"></div>
<span class="t" style="left:1203.70px;top:494px;font-size:7.9px;color:#fff;letter-spacing:0.194px;">Anular</span>
<div class="b" style="left:1155.70px;top:509.30px;width:43.70px;height:17.50px;background:#0fbdf6;border-radius:3.5px;"></div>
<span class="t" style="left:1161.95px;top:514px;font-size:7.9px;color:#fff;letter-spacing:0.266px;">Duplicar</span>
<div class="b" style="left:1203.00px;top:510.70px;width:29.90px;height:17.40px;background:#ff9409;border-radius:3.5px;"></div>
<span class="t" style="left:1209.20px;top:516px;font-size:7.9px;color:#fff;letter-spacing:0.069px;">Guía</span>
<span class="t" style="left:240.80px;top:559px;font-size:9.8px;color:#5d626e;letter-spacing:0.075px;">Total 6</span>
<svg class="b" style="left:284.00px;top:559.50px;" width="6" height="8" viewBox="0 0 6 8"><path d="M4.4 1.1L1.4 4 4.4 6.9" fill="none" stroke="#b4b9c2" stroke-width="0.9"/></svg>
<span class="t" style="left:310.26px;top:559px;font-size:9.5px;color:#2f86f6;font-weight:bold;">1</span>
<svg class="b" style="left:336.40px;top:559.50px;" width="6" height="8" viewBox="0 0 6 8"><path d="M1.6 1.1L4.6 4 1.6 6.9" fill="none" stroke="#b4b9c2" stroke-width="0.9"/></svg>
</main>
<div class="b" style="left:0.00px;top:0.00px;width:1282.00px;height:1.00px;background:#d4d4d4;border-radius:0px;"></div>
</body>
</html>
